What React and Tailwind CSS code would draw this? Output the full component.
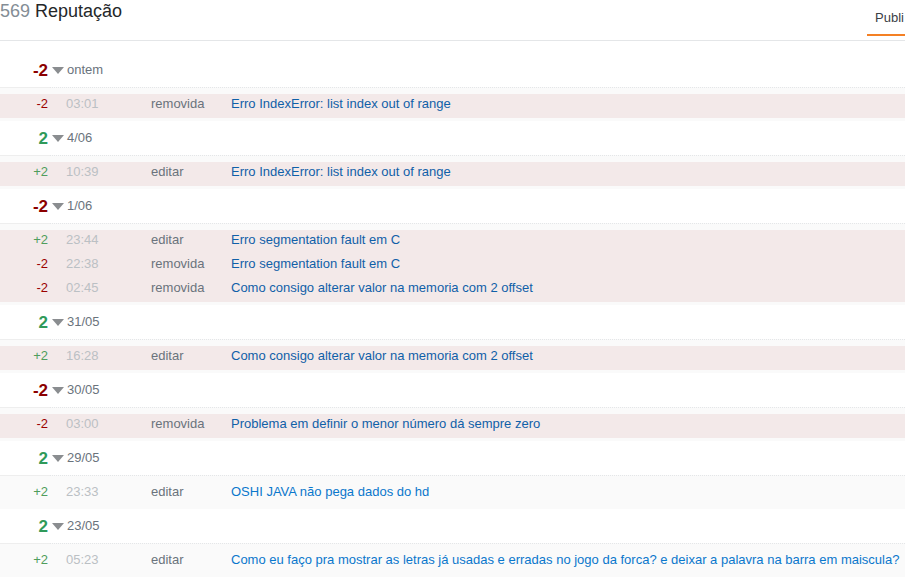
import React from 'react';

// Reputation history, grouped by day
const days = [
  { total: -2, label: 'ontem', first: true, rows: [
    { amt: -2, time: '03:01', action: 'removida', title: 'Erro IndexError: list index out of range', pink: true },
  ] },
  { total: 2, label: '4/06', rows: [
    { amt: 2, time: '10:39', action: 'editar', title: 'Erro IndexError: list index out of range', pink: true },
  ] },
  { total: -2, label: '1/06', rows: [
    { amt: 2, time: '23:44', action: 'editar', title: 'Erro segmentation fault em C', pink: true },
    { amt: -2, time: '22:38', action: 'removida', title: 'Erro segmentation fault em C', pink: true },
    { amt: -2, time: '02:45', action: 'removida', title: 'Como consigo alterar valor na memoria com 2 offset', pink: true },
  ] },
  { total: 2, label: '31/05', rows: [
    { amt: 2, time: '16:28', action: 'editar', title: 'Como consigo alterar valor na memoria com 2 offset', pink: true },
  ] },
  { total: -2, label: '30/05', rows: [
    { amt: -2, time: '03:00', action: 'removida', title: 'Problema em definir o menor número dá sempre zero', pink: true },
  ] },
  { total: 2, label: '29/05', rows: [
    { amt: 2, time: '23:33', action: 'editar', title: 'OSHI JAVA não pega dados do hd' },
  ] },
  { total: 2, label: '23/05', rows: [
    { amt: 2, time: '05:23', action: 'editar', title: 'Como eu faço pra mostrar as letras já usadas e erradas no jogo da forca? e deixar a palavra na barra em maiscula?' },
  ] },
];

const Caret = () => (
  <svg width="12" height="7" viewBox="0 0 12 7" className="ml-[4px] mr-[3px] mt-[1px]">
    <path d="M0 0 L12 0 L6 7 Z" fill="#8a8d90" />
  </svg>
);

const DayGroup = ({ day }) => (
  <div className={day.first ? 'mt-[12px]' : ''}>
    <div className="h-[34px] flex items-center">
      <span
        className={`w-[48px] text-right text-[17px] font-bold leading-none ${day.total < 0 ? 'text-[#8b0000]' : 'text-[#2f9a5a]'}`}
      >
        {day.total < 0 ? `-${Math.abs(day.total)}` : day.total}
      </span>
      <Caret />
      <span className="text-[13px] text-[#6a737c]">{day.label}</span>
    </div>
    <div className="bg-[#fafafa]">
      <div className="flex">
        <div className="w-[50px] border-t border-[#eeeeee]" />
        <div className="flex-1 border-t border-dotted border-[#e4e6e8]" />
      </div>
      <div className="pt-[6px] pb-[3px]">
        {day.rows.map((r, i) => (
          <div key={i} className={`h-[24px] pb-[4px] flex items-center text-[13px] ${r.pink ? 'bg-[#f3e9e9]' : ''}`}>
            <span className={`w-[48px] text-right ${r.amt < 0 ? 'text-[#9b0000]' : 'text-[#4f9d5c]'}`}>
              {r.amt < 0 ? `-${Math.abs(r.amt)}` : `+${r.amt}`}
            </span>
            <span className="w-[103px] pl-[18px] text-[#bbc0c4]">{r.time}</span>
            <span className="w-[80px] text-[#6a737c]">{r.action}</span>
            <span className={`whitespace-nowrap ${r.pink ? 'text-[#1060a8]' : 'text-[#0a77cc]'}`}>{r.title}</span>
          </div>
        ))}
      </div>
    </div>
  </div>
);

export default function App() {
  return (
    <div className="w-[905px] h-[582px] overflow-hidden bg-white" style={{ fontFamily: '"Liberation Sans", Arial, sans-serif' }}>
      <div className="h-[41px] flex items-start justify-between border-b border-[#e4e6e8]">
        <h1 className="text-[18px] leading-[22px] font-normal">
          <span className="text-[#848d95]">569</span> <span className="text-[#242729]">Reputação</span>
        </h1>
        <div className="w-[38px] h-[36px] overflow-hidden border-b-2 border-[#f48024] pl-[8px] pt-[5px]">
          <span className="text-[13px] leading-[15px] text-[#3b4045] whitespace-nowrap">Publi</span>
        </div>
      </div>
      {days.map((d, i) => (
        <DayGroup key={i} day={d} />
      ))}
    </div>
  );
}
